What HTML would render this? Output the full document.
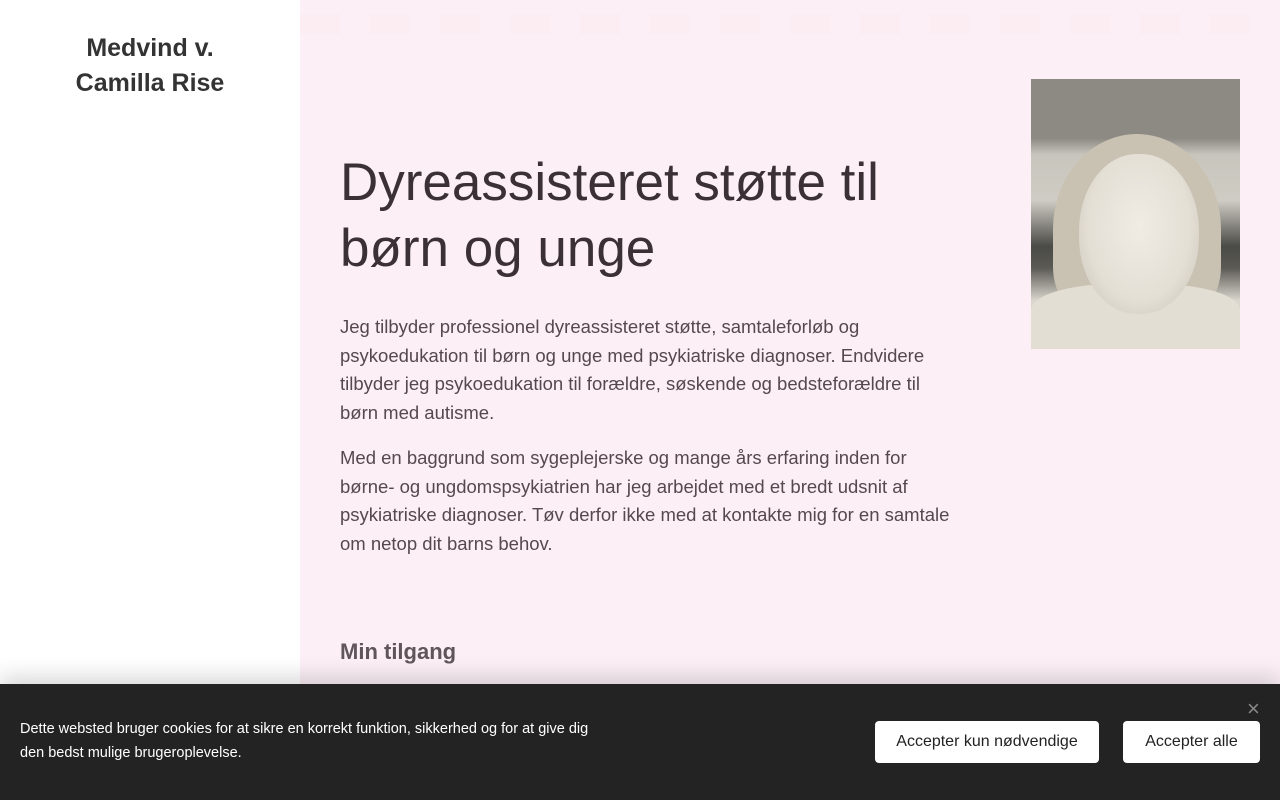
<!DOCTYPE html>
<html><head><meta charset="utf-8"><style>
*{margin:0;padding:0;box-sizing:border-box}
body{width:1280px;height:800px;overflow:hidden;font-family:"Liberation Sans",sans-serif;background:#fcf0f6;position:relative}
.side{position:absolute;left:0;top:0;width:300px;height:800px;background:#fff}
.logo{position:absolute;left:0;width:300px;top:31px;text-align:center;font-size:25px;font-weight:bold;color:#333;line-height:35px}
.main{position:absolute;left:300px;top:0;width:980px;height:800px;background:#fcf0f6}
.strip{position:absolute;left:300px;top:14px;width:980px;height:20px;background:repeating-linear-gradient(90deg,#fcedf3 0 40px,#fcf0f6 40px 70px)}
h1{position:absolute;left:340px;top:150px;width:640px;font-weight:normal;font-size:53px;line-height:66px;color:#3a3036;letter-spacing:0}
.p{position:absolute;left:340px;width:620px;font-size:18.5px;line-height:28.7px;color:#55494f}
h2{position:absolute;left:340px;top:639px;font-size:22px;font-weight:bold;color:#5f555a}
.photo{position:absolute;left:1031px;top:79px;width:209px;height:270px;overflow:hidden;
background:linear-gradient(180deg,#8d8a83 0,#8d8a83 22%,#c8c5bd 28%,#cfccc4 45%,#4a4a46 62%,#5b5a55 70%,#d9d5cc 82%,#e0dcd3 100%)}
.hair{position:absolute;left:22px;top:55px;width:168px;height:190px;border-radius:50% 50% 30% 30%;background:#c9c2b3}
.sweater{position:absolute;left:0;top:205px;width:209px;height:65px;background:#e3ded4;border-radius:40% 40% 0 0}
.face{position:absolute;left:48px;top:75px;width:120px;height:160px;border-radius:48%;background:radial-gradient(ellipse at 50% 45%,#f0ece4 0,#e4dfd5 60%,#c4beb1 100%)}
.cookie{position:absolute;left:0;top:684px;width:1280px;height:116px;background:#232323;box-shadow:0 -8px 20px rgba(0,0,0,.15)}
.ctext{position:absolute;left:20px;top:33px;width:590px;color:#fff;font-size:14.5px;line-height:24px}
.btn{position:absolute;top:37px;height:42px;background:#fff;border-radius:4px;color:#222;font-size:16px;line-height:42px;text-align:center}
.x{position:absolute;left:1247px;top:12px;color:#888;font-size:22px}
</style></head><body>
<div class="side"><div class="logo">Medvind v.<br>Camilla Rise</div></div>
<div class="main"></div>
<div class="strip"></div>
<h1>Dyreassisteret støtte til børn og unge</h1>
<div class="p" style="top:313px">Jeg tilbyder professionel dyreassisteret støtte, samtaleforløb og psykoedukation til børn og unge med psykiatriske diagnoser. Endvidere tilbyder jeg psykoedukation til forældre, søskende og bedsteforældre til børn med autisme.</div>
<div class="p" style="top:444px">Med en baggrund som sygeplejerske og mange års erfaring inden for børne- og ungdomspsykiatrien har jeg arbejdet med et bredt udsnit af psykiatriske diagnoser. Tøv derfor ikke med at kontakte mig for en samtale om netop dit barns behov.</div>
<h2>Min tilgang</h2>
<div class="photo"><div class="hair"></div><div class="sweater"></div><div class="face"></div></div>
<div class="cookie">
<div class="ctext">Dette websted bruger cookies for at sikre en korrekt funktion, sikkerhed og for at give dig den bedst mulige brugeroplevelse.</div>
<div class="btn" style="left:875px;width:224px">Accepter kun nødvendige</div>
<div class="btn" style="left:1123px;width:137px">Accepter alle</div>
<div class="x">×</div>
</div>
</body></html>
